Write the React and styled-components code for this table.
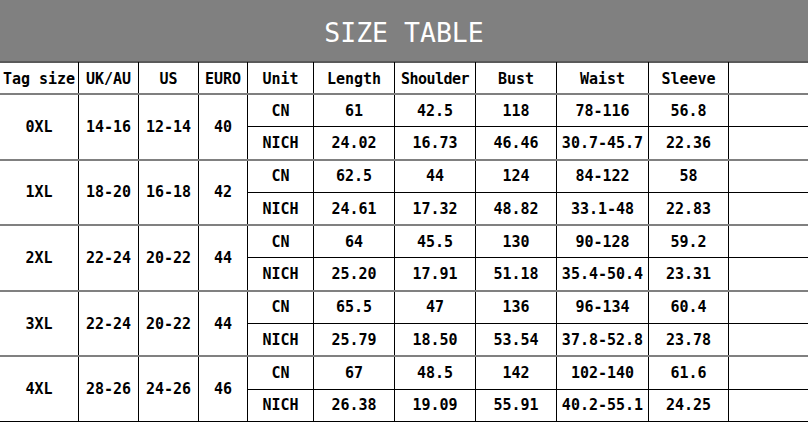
import React from "react";
import styled, { createGlobalStyle } from "styled-components";

const GlobalStyle = createGlobalStyle`
  html, body {
    margin: 0;
    padding: 0;
    background: #fff;
  }
  body {
    width: 808px;
    height: 425px;
    overflow: hidden;
  }
`;

const Page = styled.div`
  width: 808px;
  display: flex;
  flex-direction: column;
`;

const Banner = styled.div`
  height: 63px;
  background-color: #808080;
  border-bottom: 2px solid #5a5a5a;
  display: flex;
  align-items: center;
  justify-content: center;
  color: #fff;
  font-family: "DejaVu Sans Mono", monospace;
  font-size: 26.5px;
  padding-top: 3px;
  box-sizing: border-box;
`;

const Table = styled.table`
  width: 810px;
  margin-left: -1px;
  margin-top: -1px;
  border-collapse: collapse;
  table-layout: fixed;
  font-family: "DejaVu Sans Mono", monospace;
  font-weight: bold;
  font-size: 15px;
  color: #000;
`;

const HeadCell = styled.th`
  height: 28px;
  padding: 3px 0 0;
  text-align: center;
  font-weight: bold;
  border: 1px solid #000;
  border-top: none;
  border-bottom: 2px solid #7f7f7f;
  white-space: nowrap;
  letter-spacing: ${(p) => (p.$tight ? "-0.5px" : "0")};
`;

const GroupRow = styled.tr`
  & > td {
    border-top: 2px solid #808080;
  }
`;

const Cell = styled.td`
  height: 31.3px;
  padding: 0;
  text-align: center;
  border: 1px solid #000;
  white-space: nowrap;
`;

const widths = [79, 60, 60, 49, 66, 81, 81, 81, 92, 80, 81];

const headers = ["Tag size", "UK/AU", "US", "EURO", "Unit", "Length", "Shoulder", "Bust", "Waist", "Sleeve", ""];

const sizes = [
  { tag: "0XL", uk: "14-16", us: "12-14", euro: "40", cn: ["61", "42.5", "118", "78-116", "56.8"], inch: ["24.02", "16.73", "46.46", "30.7-45.7", "22.36"] },
  { tag: "1XL", uk: "18-20", us: "16-18", euro: "42", cn: ["62.5", "44", "124", "84-122", "58"], inch: ["24.61", "17.32", "48.82", "33.1-48", "22.83"] },
  { tag: "2XL", uk: "22-24", us: "20-22", euro: "44", cn: ["64", "45.5", "130", "90-128", "59.2"], inch: ["25.20", "17.91", "51.18", "35.4-50.4", "23.31"] },
  { tag: "3XL", uk: "22-24", us: "20-22", euro: "44", cn: ["65.5", "47", "136", "96-134", "60.4"], inch: ["25.79", "18.50", "53.54", "37.8-52.8", "23.78"] },
  { tag: "4XL", uk: "28-26", us: "24-26", euro: "46", cn: ["67", "48.5", "142", "102-140", "61.6"], inch: ["26.38", "19.09", "55.91", "40.2-55.1", "24.25"] },
];

const App = () => {
  return (
    <Page>
      <GlobalStyle />
      <Banner>SIZE TABLE</Banner>
      <Table>
        <colgroup>
          {widths.map((w, i) => (
            <col key={i} style={{ width: w }} />
          ))}
        </colgroup>
        <thead>
          <tr>
            {headers.map((h, i) => (
              <HeadCell key={i} $tight={h === "Shoulder"}>{h}</HeadCell>
            ))}
          </tr>
        </thead>
        <tbody>
          {sizes.map((s) => (
            <React.Fragment key={s.tag}>
              <GroupRow>
                <Cell rowSpan={2}>{s.tag}</Cell>
                <Cell rowSpan={2}>{s.uk}</Cell>
                <Cell rowSpan={2}>{s.us}</Cell>
                <Cell rowSpan={2}>{s.euro}</Cell>
                <Cell>CN</Cell>
                {s.cn.map((v, i) => (
                  <Cell key={i}>{v}</Cell>
                ))}
                <Cell />
              </GroupRow>
              <tr>
                <Cell>NICH</Cell>
                {s.inch.map((v, i) => (
                  <Cell key={i}>{v}</Cell>
                ))}
                <Cell />
              </tr>
            </React.Fragment>
          ))}
        </tbody>
      </Table>
    </Page>
  );
};

export default App;
